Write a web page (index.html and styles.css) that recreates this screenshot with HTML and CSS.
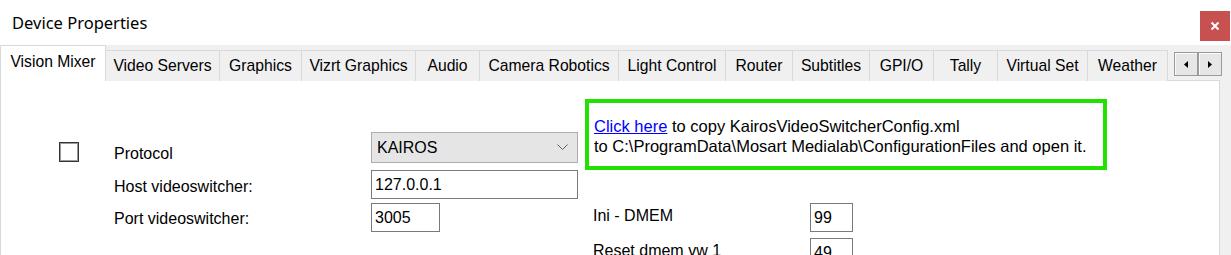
FILE: index.html
```html
<!DOCTYPE html>
<html>
<head>
<meta charset="utf-8">
<link rel="stylesheet" href="styles.css">
</head>
<body>
<div class="window">
  <div class="titlebar">
    <span class="title">Device Properties</span>
    <button class="close" aria-label="Close">
      <svg width="10" height="10" viewBox="0 0 10 10"><path d="M1.5 1.5 L8.5 8.5 M8.5 1.5 L1.5 8.5" stroke="#fff" stroke-width="2" fill="none"/></svg>
    </button>
  </div>
  <div class="tabstrip">
    <div class="tabs">
      <div class="tab active t1">Vision Mixer</div>
      <div class="tab t2">Video Servers</div>
      <div class="tab t3">Graphics</div>
      <div class="tab t4">Vizrt Graphics</div>
      <div class="tab t5">Audio</div>
      <div class="tab t6">Camera Robotics</div>
      <div class="tab t7">Light Control</div>
      <div class="tab t8">Router</div>
      <div class="tab t9">Subtitles</div>
      <div class="tab t10">GPI/O</div>
      <div class="tab t11">Tally</div>
      <div class="tab t12">Virtual Set</div>
      <div class="tab t13">Weather</div>
    </div>
    <div class="scroller">
      <span class="sbtn"><svg width="4" height="7" viewBox="0 0 4 7"><polygon points="4,0 0,3.5 4,7" fill="#000"/></svg></span>
      <span class="sbtn"><svg width="4" height="7" viewBox="0 0 4 7"><polygon points="0,0 4,3.5 0,7" fill="#000"/></svg></span>
    </div>
  </div>
  <div class="page">
    <div class="left">
      <div class="row r1">
        <span class="lead"><span class="check"></span></span>
        <span class="label">Protocol</span>
        <div class="combo"><span>KAIROS</span><svg width="11" height="7" viewBox="0 0 11 7"><polyline points="0.5,0.5 5.5,5.5 10.5,0.5" fill="none" stroke="#606060" stroke-width="1"/></svg></div>
      </div>
      <div class="row r2">
        <span class="lead"></span>
        <span class="label">Host videoswitcher:</span>
        <div class="textbox wide">127.0.0.1</div>
      </div>
      <div class="row r3">
        <span class="lead"></span>
        <span class="label">Port videoswitcher:</span>
        <div class="textbox narrow">3005</div>
      </div>
    </div>
    <div class="right">
      <div class="notice">
        <a href="#" class="link">Click here</a> to copy KairosVideoSwitcherConfig.xml<br>
        to C:\ProgramData\Mosart Medialab\ConfigurationFiles and open it.
      </div>
      <div class="prow p1">
        <span class="plabel">Ini - DMEM</span>
        <div class="textbox small">99</div>
      </div>
      <div class="prow p2">
        <span class="plabel">Reset dmem vw 1</span>
        <div class="textbox small">49</div>
      </div>
    </div>
  </div>
</div>
</body>
</html>
```
FILE: styles.css
```css
html, body {
  margin: 0;
  padding: 0;
}
body {
  width: 1231px;
  height: 255px;
  overflow: hidden;
  background: #f0f0f0;
  font-family: "Liberation Sans", Arial, sans-serif;
  font-size: 16px;
  color: #000;
}
.window {
  width: 1231px;
  height: 255px;
  overflow: hidden;
}
.titlebar {
  height: 45px;
  background: #fff;
  display: flex;
  align-items: flex-start;
}
.title {
  font-family: "Noto Sans", "Open Sans", sans-serif;
  font-size: 16.5px;
  line-height: 22px;
  margin: 12px 0 0 12px;
  color: #000;
}
.close {
  margin: 11px 1px 0 auto;
  width: 30px;
  height: 30px;
  padding: 0;
  border: 0;
  background: #c75050;
  display: flex;
  align-items: center;
  justify-content: center;
}
.tabstrip {
  display: flex;
  height: 36px;
  align-items: flex-start;
}
.tabs {
  display: flex;
  align-items: flex-end;
  height: 36px;
}
.tab {
  box-sizing: border-box;
  height: 31px;
  border-top: 1px solid #d9d9d9;
  border-right: 1px solid #d9d9d9;
  background: #f0f0f0;
  text-align: center;
  font-size: 15.7px;
  line-height: 30px;
  white-space: nowrap;
  overflow: hidden;
}
.tab.active {
  height: 36px;
  background: #fff;
  border-left: 1px solid #d9d9d9;
  line-height: 32px;
  position: relative;
  z-index: 1;
}
.t1 { width: 106px; }
.t2 { width: 114px; }
.t3 { width: 82px; }
.t4 { width: 114px; }
.t5 { width: 64px; }
.t6 { width: 139px; }
.t7 { width: 107px; }
.t8 { width: 67px; }
.t9 { width: 77px; }
.t10 { width: 64px; }
.t11 { width: 64px; }
.t12 { width: 90px; }
.t13 { width: 80px; }
.scroller {
  display: flex;
  margin: 7px 0 0 6px;
}
.sbtn {
  box-sizing: border-box;
  width: 24px;
  height: 24px;
  border: 1px solid #9a9a9a;
  background: #e6e6e6;
  box-shadow: inset 1px 1px 0 #fafafa;
  display: flex;
  align-items: center;
  justify-content: center;
}
.page {
  margin-top: -1px;
  width: 1220px;
  height: 200px;
  box-sizing: border-box;
  border: 1px solid #d9d9d9;
  background: #fff;
  display: flex;
}
.left {
  width: 579px;
  flex: none;
  padding-top: 51px;
  box-sizing: border-box;
}
.row {
  display: flex;
  align-items: flex-start;
}
.r2 { margin-top: 7px; }
.r3 { margin-top: 4px; }
.lead {
  width: 113px;
  flex: none;
}
.check {
  display: block;
  box-sizing: border-box;
  width: 20px;
  height: 20px;
  margin: 10px 0 0 58px;
  border: 1px solid #333;
  box-shadow: inset 0 0 0 1px #9a9a9a;
  background: #fff;
}
.label {
  width: 257px;
  flex: none;
  line-height: 17px;
}
.r1 .label { margin-top: 13px; }
.r2 .label { margin-top: 8px; }
.r3 .label { margin-top: 7px; }
.combo {
  box-sizing: border-box;
  width: 207px;
  height: 31px;
  border: 1px solid #adadad;
  background: #e5e5e5;
  display: flex;
  align-items: center;
  justify-content: space-between;
  padding: 0 9px 0 5px;
}
.textbox {
  box-sizing: border-box;
  height: 29px;
  border: 1px solid #7a7a7a;
  background: #fff;
  padding-left: 3px;
  line-height: 27px;
}
.wide { width: 207px; }
.narrow { width: 69px; }
.small { width: 43px; }
.right {
  flex: 1;
}
.notice {
  box-sizing: border-box;
  width: 522px;
  height: 71px;
  margin: 18px 0 0 5px;
  border: 4px solid #22e000;
  padding: 13px 0 0 5px;
  font-size: 16.5px;
  line-height: 20px;
  white-space: nowrap;
}
.link {
  color: #0000ff;
  text-decoration: underline;
}
.prow {
  display: flex;
  align-items: center;
}
.p1 { margin-top: 33px; }
.p2 { margin-top: 6px; }
.plabel {
  width: 217px;
  margin-left: 13px;
  line-height: 17px;
  padding-bottom: 4px;
}
```
